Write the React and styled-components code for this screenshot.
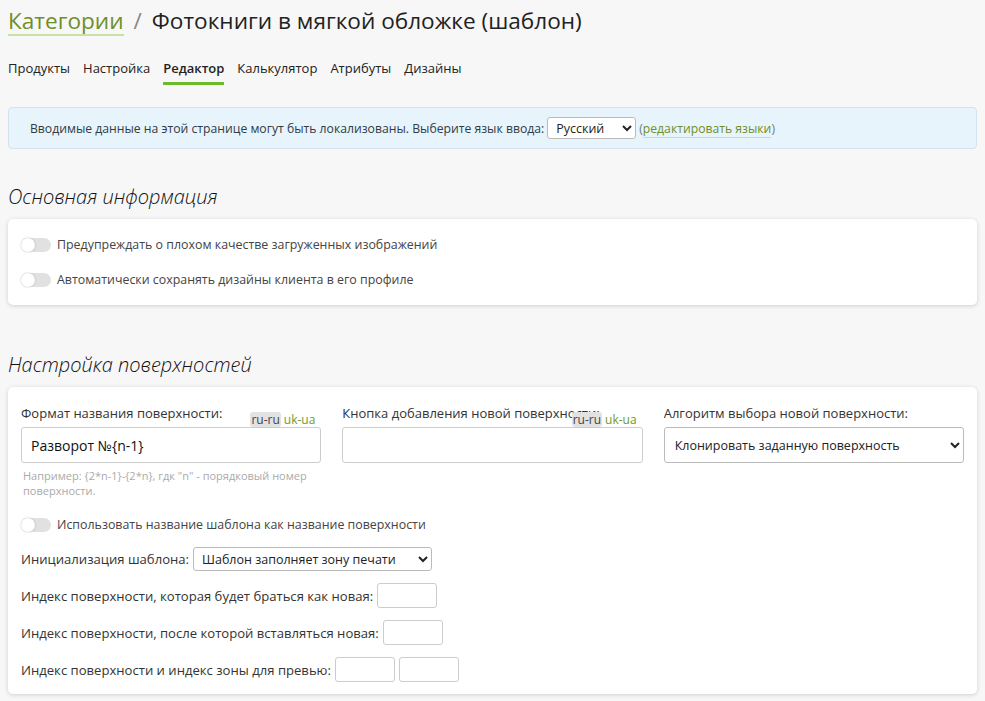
import React from "react";
import styled, { createGlobalStyle } from "styled-components";

const Global = createGlobalStyle`
  html, body {
    margin: 0;
    padding: 0;
    background: #f7f7f7;
  }
  body {
    font-family: "Open Sans", "Noto Sans", sans-serif;
    font-size: 13px;
    color: #333;
  }
`;

const Page = styled.div`
  padding: 0 8px 8px;
`;

const Title = styled.h1`
  margin: 0;
  padding-top: 6px;
  font-size: 22.6px;
  font-weight: 400;
  color: #222;
  display: flex;
  align-items: baseline;
  gap: 10px;
  line-height: 30px;
`;

const Crumb = styled.a`
  color: #6f8f26;
  text-decoration: none;
  border-bottom: 2px solid #c7e2a3;
  line-height: 26px;
`;

const Slash = styled.span`
  color: #888;
`;

const Tabs = styled.nav`
  display: flex;
  gap: 13px;
  margin-top: 17px;
`;

const Tab = styled.a`
  padding: 6px 0 5px;
  color: #222;
  font-weight: ${p => (p.$active ? 600 : 400)};
  border-bottom: 3px solid ${p => (p.$active ? "#6cbb2c" : "transparent")};
`;

const Info = styled.div`
  margin-top: 22px;
  background: #e8f4fc;
  border: 1px solid #d2e4ef;
  border-radius: 4px;
  padding: 9px 21px;
  display: flex;
  align-items: center;
  gap: 3px;
  font-size: 12.2px;
  color: #2f3b45;
`;

const SmallSelect = styled.select`
  font-family: inherit;
  font-size: 12.5px;
  color: #222;
  height: ${p => p.$h}px;
  width: ${p => p.$w}px;
  border: 1px solid #bbb;
  border-radius: 3px;
  background: #fff;
  padding: 0 4px;
`;

const Link = styled.a`
  color: #6f8f26;
  border-bottom: 1px solid #c7e2a3;
`;

const Paren = styled.span`
  color: #777;
`;

const Heading = styled.h2`
  margin: ${p => p.$top}px 0 9px;
  font-size: 20px;
  font-style: italic;
  font-weight: 300;
  color: #111;
  line-height: 26px;
`;

const Card = styled.section`
  background: #fff;
  border-radius: 5px;
  box-shadow: 0 1px 4px rgba(0, 0, 0, 0.16);
  padding: ${p => p.$pad};
  display: flex;
  flex-direction: column;
  gap: ${p => p.$gap}px;
`;

const Toggle = styled.label`
  display: flex;
  align-items: center;
  gap: 6px;
  color: #444;
  font-size: 12.4px;
  line-height: 21px;
`;

const Track = styled.span`
  width: 30px;
  height: 14px;
  border-radius: 7px;
  background: #e1e1e1;
  position: relative;
  flex-shrink: 0;

  &::after {
    content: "";
    position: absolute;
    left: 0;
    top: 0;
    width: 14px;
    height: 14px;
    border-radius: 50%;
    background: #fff;
    box-shadow: 0 0 2px rgba(0, 0, 0, 0.25);
  }
`;

const Columns = styled.div`
  display: grid;
  grid-template-columns: repeat(3, 1fr);
  gap: 21px;
`;

const Field = styled.div`
  position: relative;
  display: flex;
  flex-direction: column;
`;

const Label = styled.div`
  color: #333;
  line-height: 20px;
  margin-bottom: 4px;
  white-space: nowrap;
  overflow: hidden;
`;

const Langs = styled.div`
  position: absolute;
  right: 5px;
  top: 9px;
  display: flex;
  gap: 2px;
  font-size: 12px;
  line-height: 15px;
`;

const Lang = styled.span`
  padding: 0 1px;
  border-radius: 3px;
  background: ${p => (p.$active ? "#e2e2e2" : "transparent")};
  color: ${p => (p.$active ? "#444" : "#6f9a1f")};
`;

const BigInput = styled.input`
  font-family: inherit;
  font-size: 14px;
  color: #111;
  height: 36px;
  box-sizing: border-box;
  border: 1px solid #ccc;
  border-radius: 3px;
  padding: 0 9px;
  outline: none;
`;

const BigSelect = styled.select`
  font-family: inherit;
  font-size: 12.5px;
  color: #222;
  height: 36px;
  border: 1px solid #bbb;
  border-radius: 3px;
  background: #fff;
  padding: 0 6px;
`;

const Hint = styled.div`
  margin-top: 5px;
  font-size: 11px;
  line-height: 15px;
  color: #aaa;
  padding-left: 2px;
`;

const Row = styled.div`
  display: flex;
  align-items: center;
  gap: 4px;
  color: #333;
  font-size: 13.1px;
  line-height: 20px;
`;

const SmallInput = styled.input`
  width: 60px;
  height: 25px;
  box-sizing: border-box;
  border: 1px solid #ccc;
  border-radius: 3px;
  outline: none;
`;

const Stack = styled.div`
  display: flex;
  flex-direction: column;
  gap: 12px;
  margin-top: 5px;
`;

const LangSwitch = () => (
  <Langs>
    <Lang $active>ru-ru</Lang>
    <Lang>uk-ua</Lang>
  </Langs>
);

export default function App() {
  return (
    <Page>
      <Global />
      <Title>
        <Crumb>Категории</Crumb>
        <Slash>/</Slash>
        <span>Фотокниги в мягкой обложке (шаблон)</span>
      </Title>
      <Tabs>
        <Tab>Продукты</Tab>
        <Tab>Настройка</Tab>
        <Tab $active>Редактор</Tab>
        <Tab>Калькулятор</Tab>
        <Tab>Атрибуты</Tab>
        <Tab>Дизайны</Tab>
      </Tabs>

      <Info>
        <span>Вводимые данные на этой странице могут быть локализованы. Выберите язык ввода:</span>
        <SmallSelect $w={89} $h={22} defaultValue="ru">
          <option value="ru">Русский</option>
        </SmallSelect>
        <Paren>
          (<Link>редактировать языки</Link>)
        </Paren>
      </Info>

      <Heading $top={35}>Основная информация</Heading>
      <Card $pad="15px 13px 15px" $gap={14}>
        <Toggle>
          <Track />
          Предупреждать о плохом качестве загруженных изображений
        </Toggle>
        <Toggle>
          <Track />
          Автоматически сохранять дизайны клиента в его профиле
        </Toggle>
      </Card>

      <Heading $top={47}>Настройка поверхностей</Heading>
      <Card $pad="16px 13px 12px" $gap={11}>
        <Columns>
          <Field>
            <Label>Формат названия поверхности:</Label>
            <LangSwitch />
            <BigInput defaultValue="Разворот №{n-1}" />
            <Hint>Например: {"{2*n-1}-{2*n}"}, гдк "n" - порядковый номер поверхности.</Hint>
          </Field>
          <Field>
            <Label>Кнопка добавления новой поверхности:</Label>
            <LangSwitch />
            <BigInput />
          </Field>
          <Field>
            <Label>Алгоритм выбора новой поверхности:</Label>
            <BigSelect defaultValue="clone">
              <option value="clone">Клонировать заданную поверхность</option>
            </BigSelect>
          </Field>
        </Columns>
        <Stack>
          <Toggle>
            <Track />
            Использовать название шаблона как название поверхности
          </Toggle>
          <Row>
            Инициализация шаблона:
            <SmallSelect $w={239} $h={24} defaultValue="fill">
              <option value="fill">Шаблон заполняет зону печати</option>
            </SmallSelect>
          </Row>
          <Row>
            Индекс поверхности, которая будет браться как новая:
            <SmallInput />
          </Row>
          <Row>
            Индекс поверхности, после которой вставляться новая:
            <SmallInput />
          </Row>
          <Row>
            Индекс поверхности и индекс зоны для превью:
            <SmallInput />
            <SmallInput />
          </Row>
        </Stack>
      </Card>
    </Page>
  );
}
